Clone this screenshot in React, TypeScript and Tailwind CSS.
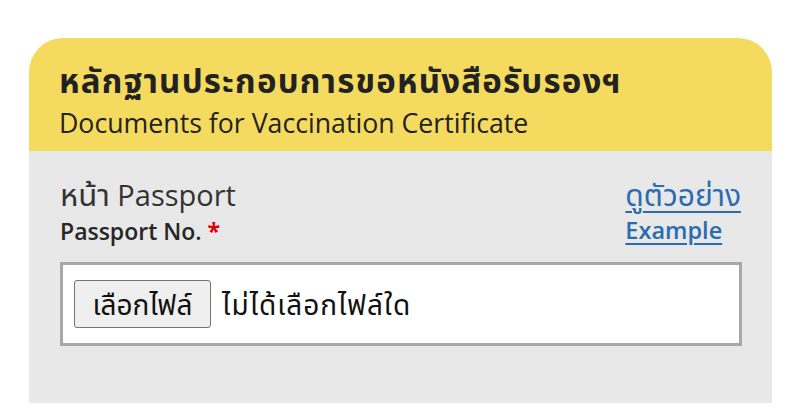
import React from 'react';

const font = { fontFamily: '"Open Sans", "Noto Sans Thai", "Noto Sans", sans-serif' };

export default function App() {
  return (
    <div className="w-[800px] h-[412px] bg-white overflow-hidden pt-[38px] pl-[29px]" style={font}>
      <div className="w-[743px]">
        {/* header */}
        <div className="bg-[#f4da5e] rounded-t-[34px] px-[30px] pt-[21px] h-[113px]">
          <div className="text-[33px] font-bold leading-[44px] tracking-[1.2px] text-[#222] whitespace-nowrap">
            หลักฐานประกอบการขอหนังสือรับรองฯ
          </div>
          <div className="text-[26.7px] leading-[40px] text-[#222] whitespace-nowrap">
            Documents for Vaccination Certificate
          </div>
        </div>

        {/* body */}
        <div className="bg-[#e8e8e8] h-[252px] px-[31px] pt-[24px]">
          <div className="flex justify-between">
            <div className="flex flex-col">
              <span className="text-[29px] leading-[38px] text-[#333] whitespace-nowrap">
                <span className="text-[31px]">หน้า</span> Passport
              </span>
              <span className="text-[23px] leading-[35px] font-semibold text-[#262626]">
                Passport No. <span className="text-[#e00000] font-bold">*</span>
              </span>
            </div>
            <div className="flex flex-col items-start pt-[1px]">
              <a className="text-[30px] leading-[37px] text-[#2b6cb0] underline underline-offset-[5px] decoration-2 whitespace-nowrap">ดูตัวอย่าง</a>
              <a className="text-[23.5px] leading-[34px] font-semibold text-[#2b6cb0] underline underline-offset-4 decoration-2">Example</a>
            </div>
          </div>

          {/* file input */}
          <div className="mt-[13px] h-[84px] w-[682px] border-[3px] border-[#a8a8a8] bg-white flex items-center px-[11px]">
            <button className="h-[48px] w-[137px] bg-[#efefef] border border-[#767676] rounded-[3px] text-[28px] text-[#111] leading-none">
              เลือกไฟล์
            </button>
            <span className="ml-[11px] text-[28px] tracking-[1px] text-[#111] whitespace-nowrap">ไม่ได้เลือกไฟล์ใด</span>
          </div>
        </div>
      </div>
    </div>
  );
}
